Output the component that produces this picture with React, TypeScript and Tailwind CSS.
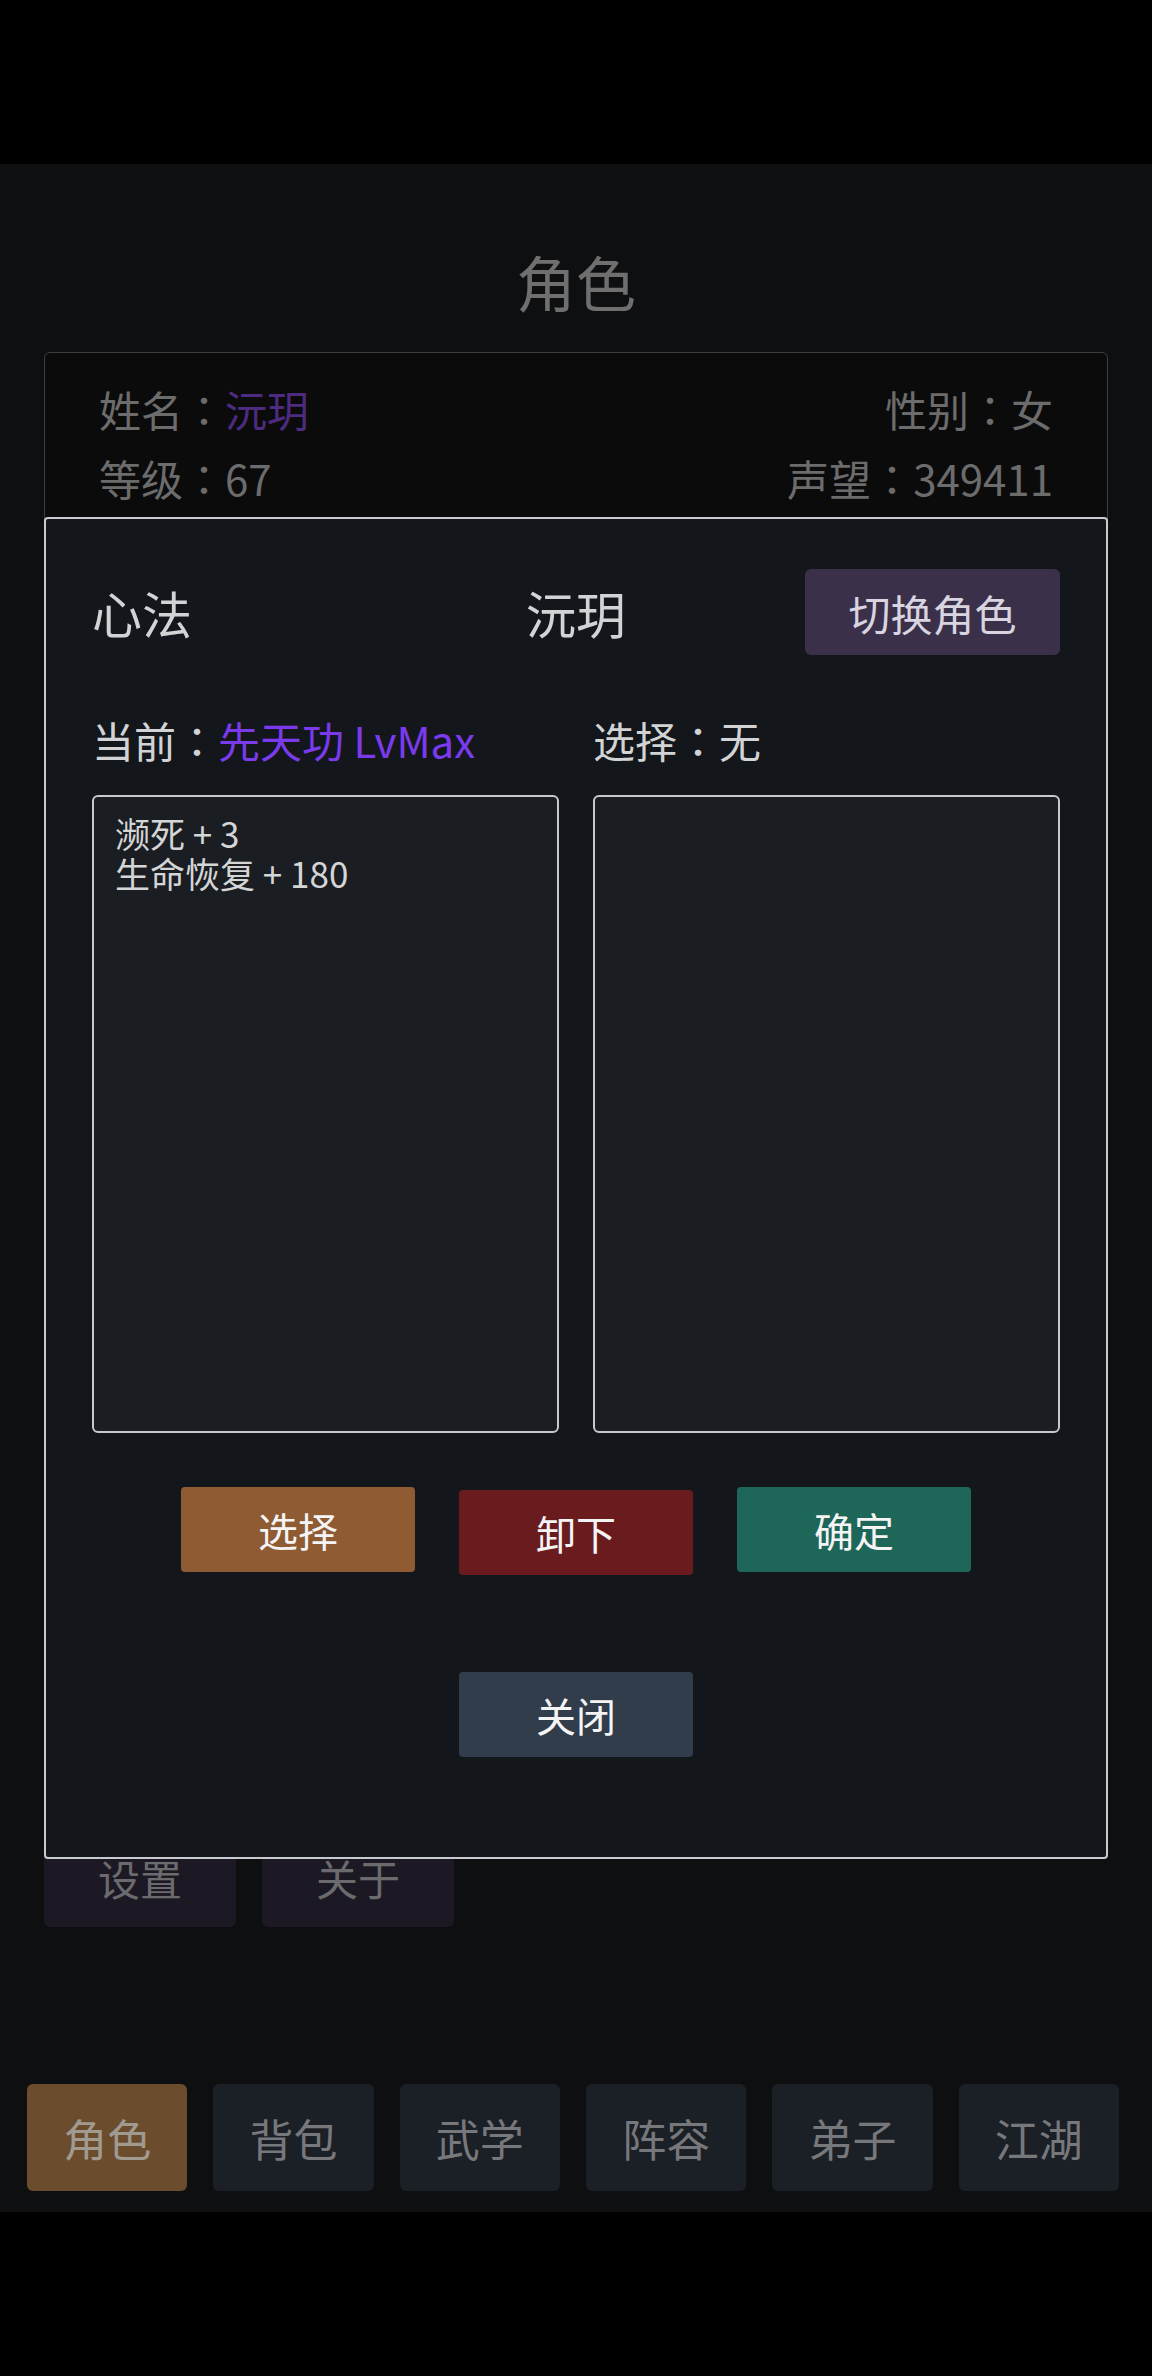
import React from 'react';

const tabs = ['角色', '背包', '武学', '阵容', '弟子', '江湖'];

// 全角冒号居中显示
const Colon = () => <span className="font-['Noto_Sans_CJK_TC',sans-serif]">：</span>;

const App: React.FC = () => {
  return (
    <div className="h-[2376px] bg-black flex flex-col font-['Noto_Sans_CJK_SC','Noto_Sans',sans-serif]">
      <div className="h-[164px] shrink-0" />

      {/* 主界面 */}
      <div className="relative h-[2048px] shrink-0 bg-[#0e0f11] flex flex-col">
        <h1 className="mt-[87px] h-[60px] leading-[60px] text-center text-[60px] text-[#6f6f70]">角色</h1>

        {/* 角色信息 */}
        <div className="mt-[41px] mx-[44px] h-[190px] border border-[#3e3e40] rounded-[6px] bg-[#0b0b0c] px-[54px] pt-[25px] flex flex-col gap-[9px]">
          <div className="flex justify-between h-[60px] items-center text-[42px] text-[#6c6c6d]">
            <span>
              姓名<Colon /><span className="text-[#4c2b80]">沅玥</span>
            </span>
            <span>
              性别<Colon />女
            </span>
          </div>
          <div className="flex justify-between h-[60px] items-center text-[42px] text-[#6c6c6d]">
            <span>
              等级<Colon />67
            </span>
            <span>
              声望<Colon />349411
            </span>
          </div>
        </div>

        {/* 其他按钮 */}
        <div className="mt-[1285px] mx-[44px] grid grid-cols-5 gap-[26px]">
          <button className="h-[100px] rounded-[6px] bg-[#1c1924] text-[42px] text-[#6b6b6d]">设置</button>
          <button className="h-[100px] rounded-[6px] bg-[#1c1924] text-[42px] text-[#6b6b6d]">关于</button>
        </div>

        {/* 底部导航 */}
        <div className="mt-auto mb-[21px] pl-[27px] pr-[33px] flex gap-[26px]">
          {tabs.map((t, i) => (
            <button
              key={t}
              className={`flex-1 h-[107px] rounded-[6px] text-[44px] ${
                i === 0 ? 'bg-[#6b4c2c] text-[#a09a90]' : 'bg-[#1b1f26] text-[#77787b]'
              }`}
            >
              {t}
            </button>
          ))}
        </div>

        {/* 心法弹窗 */}
        <div className="absolute inset-0 flex items-center px-[44px]">
          <div className="w-full h-[1342px] border-2 border-[#c9cacf] rounded-[4px] bg-[#13171b] px-[46px] pt-[50px] flex flex-col">
            <div className="grid grid-cols-3 items-center h-[86px]">
              <span className="text-[50px] text-[#d2d3d5]">心法</span>
              <span className="text-center text-[50px] text-[#d2d3d5]">沅玥</span>
              <div className="flex justify-end">
                <button className="w-[255px] h-[86px] rounded-[6px] bg-[#3b3049] text-[42px] text-[#d8d4e0]">
                  切换角色
                </button>
              </div>
            </div>

            <div className="mt-[55px] grid grid-cols-2 gap-[34px]">
              <div className="flex flex-col">
                <div className="h-[60px] leading-[60px] text-[42px] text-[#d2d3d5]">
                  当前<Colon />
                  <span className="text-[#7c3aed]">先天功 LvMax</span>
                </div>
                <div className="mt-[25px] h-[638px] border-2 border-[#c8c9cd] rounded-[6px] bg-[#1a1d21] px-[21px] pt-[16px] text-[35px] leading-[40px] text-[#d4d5d7]">
                  <div>濒死 + 3</div>
                  <div>生命恢复 + 180</div>
                </div>
              </div>
              <div className="flex flex-col">
                <div className="h-[60px] leading-[60px] text-[42px] text-[#d2d3d5]">
                  选择<Colon />无
                </div>
                <div className="mt-[25px] h-[638px] border-2 border-[#c8c9cd] rounded-[6px] bg-[#1a1d21]" />
              </div>
            </div>

            <div className="mt-[54px] flex justify-center items-start gap-[44px]">
              <button className="w-[234px] h-[85px] rounded-[4px] bg-[#8f5b33] text-[40px] text-[#f4f4f4]">选择</button>
              <button className="mt-[3px] w-[234px] h-[85px] rounded-[4px] bg-[#6a1b1e] text-[40px] text-[#f4f4f4]">卸下</button>
              <button className="w-[234px] h-[85px] rounded-[4px] bg-[#1e6658] text-[40px] text-[#f4f4f4]">确定</button>
            </div>

            <div className="mt-[97px] flex justify-center">
              <button className="w-[234px] h-[85px] rounded-[4px] bg-[#323d4b] text-[40px] text-[#f4f4f4]">关闭</button>
            </div>
          </div>
        </div>
      </div>

      <div className="flex-1 bg-black" />
    </div>
  );
};

export default App;
